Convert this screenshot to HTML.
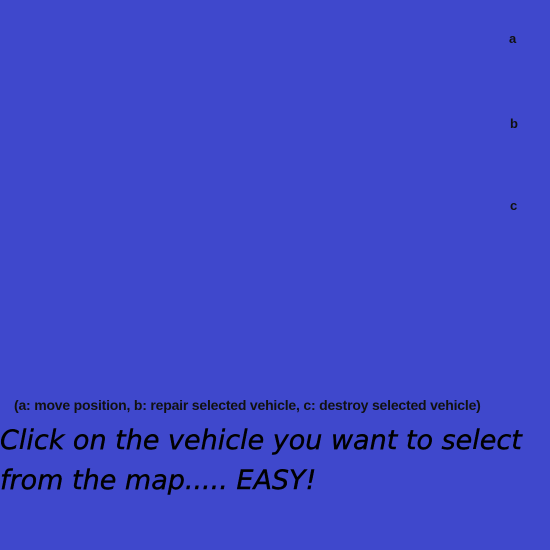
<!DOCTYPE html>
<html><head><style>
html,body{margin:0;padding:0;width:550px;height:550px;background:#3f48cc;overflow:hidden;position:relative;font-family:"Liberation Sans",sans-serif;}
.l{position:absolute;font-weight:bold;font-size:13px;color:#111;}
.cap{position:absolute;left:14px;top:397px;font-family:"Liberation Sans Narrow","Liberation Sans",sans-serif;font-stretch:condensed;font-weight:bold;font-size:14px;color:#111;letter-spacing:-0.2px;white-space:nowrap;}
.big{position:absolute;left:0;top:421px;font-family:"DejaVu Sans",sans-serif;font-style:italic;font-size:27px;line-height:40px;color:#000;white-space:nowrap;letter-spacing:0px;-webkit-text-stroke:0.4px #000;}
</style></head><body>
<div class="l" style="left:509px;top:31px">a</div>
<div class="l" style="left:510px;top:116px">b</div>
<div class="l" style="left:510px;top:198px">c</div>
<div class="cap">(a: move position, b: repair selected vehicle, c: destroy selected vehicle)</div>
<div class="big">Click on the vehicle you want to select<br>from the map..... EASY!</div>
</body></html>
